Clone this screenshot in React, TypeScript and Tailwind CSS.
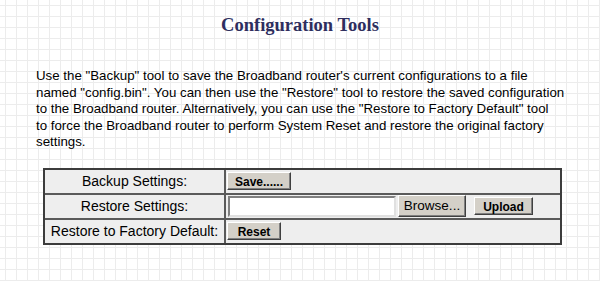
const rows = [
  { label: "Backup Settings:", kind: "save" },
  { label: "Restore Settings:", kind: "restore" },
  { label: "Restore to Factory Default:", kind: "reset" },
];

function Btn({ children, className = "" }: { children: React.ReactNode; className?: string }) {
  return (
    <button
      className={`bg-[#d4d0c8] border border-t-white border-l-white border-r-[#404040] border-b-[#404040] shadow-[inset_-1px_-1px_0_#808080] text-black ${className}`}
    >
      {children}
    </button>
  );
}

export default function App() {
  return (
    <main className="min-h-screen w-full bg-white bg-[linear-gradient(to_right,#ececec_1px,transparent_1px),linear-gradient(to_bottom,#ececec_1px,transparent_1px)] bg-[size:11px_11px] bg-[position:5px_5px] font-['Liberation_Sans',Arial,sans-serif]">
      <h1 className="pt-[15px] text-center font-['Liberation_Serif','Times_New_Roman',serif] text-[18.5px] font-bold leading-[20px] text-[#2e2e5e]">
        Configuration Tools
      </h1>

      <p className="mt-[33px] pl-[36px] text-[13.3px] leading-[16.5px] text-black whitespace-nowrap">
        Use the "Backup" tool to save the Broadband router's current configurations to a file
        <br />
        named "config.bin". You can then use the "Restore" tool to restore the saved configuration
        <br />
        to the Broadband router. Alternatively, you can use the "Restore to Factory Default" tool
        <br />
        to force the Broadband router to perform System Reset and restore the original factory
        <br />
        settings.
      </p>

      <div className="ml-[43px] mt-[17px] w-[519px] border-2 border-[#3c3c3c] bg-[#eeeeee]">
        {rows.map((r, i) => (
          <div
            key={r.kind}
            className={`grid grid-cols-[181px_1fr] h-[23px] box-content ${i > 0 ? "border-t-2 border-t-[#5a5a5a]" : ""}`}
          >
            <div className="flex items-center justify-center border-r-2 border-r-[#5a5a5a] text-[14px] text-black">
              {r.label}
            </div>
            <div className="flex items-center pl-[1px]">
              {r.kind === "save" && (
                <Btn className="h-[18px] w-[64px] text-[12px] font-bold">Save......</Btn>
              )}
              {r.kind === "restore" && (
                <>
                  <input
                    className="ml-[1px] h-[21px] w-[168px] bg-white border-2 border-t-[#808080] border-l-[#808080] border-r-[#e0e0e0] border-b-[#e0e0e0] outline-none"
                    type="text"
                  />
                  <Btn className="ml-[2px] h-[22px] w-[68px] text-[13.5px]">Browse...</Btn>
                  <Btn className="ml-[8px] h-[18px] w-[59px] text-[12px] font-bold">Upload</Btn>
                </>
              )}
              {r.kind === "reset" && (
                <Btn className="h-[18px] w-[54px] text-[12px] font-bold">Reset</Btn>
              )}
            </div>
          </div>
        ))}
      </div>
    </main>
  );
}
